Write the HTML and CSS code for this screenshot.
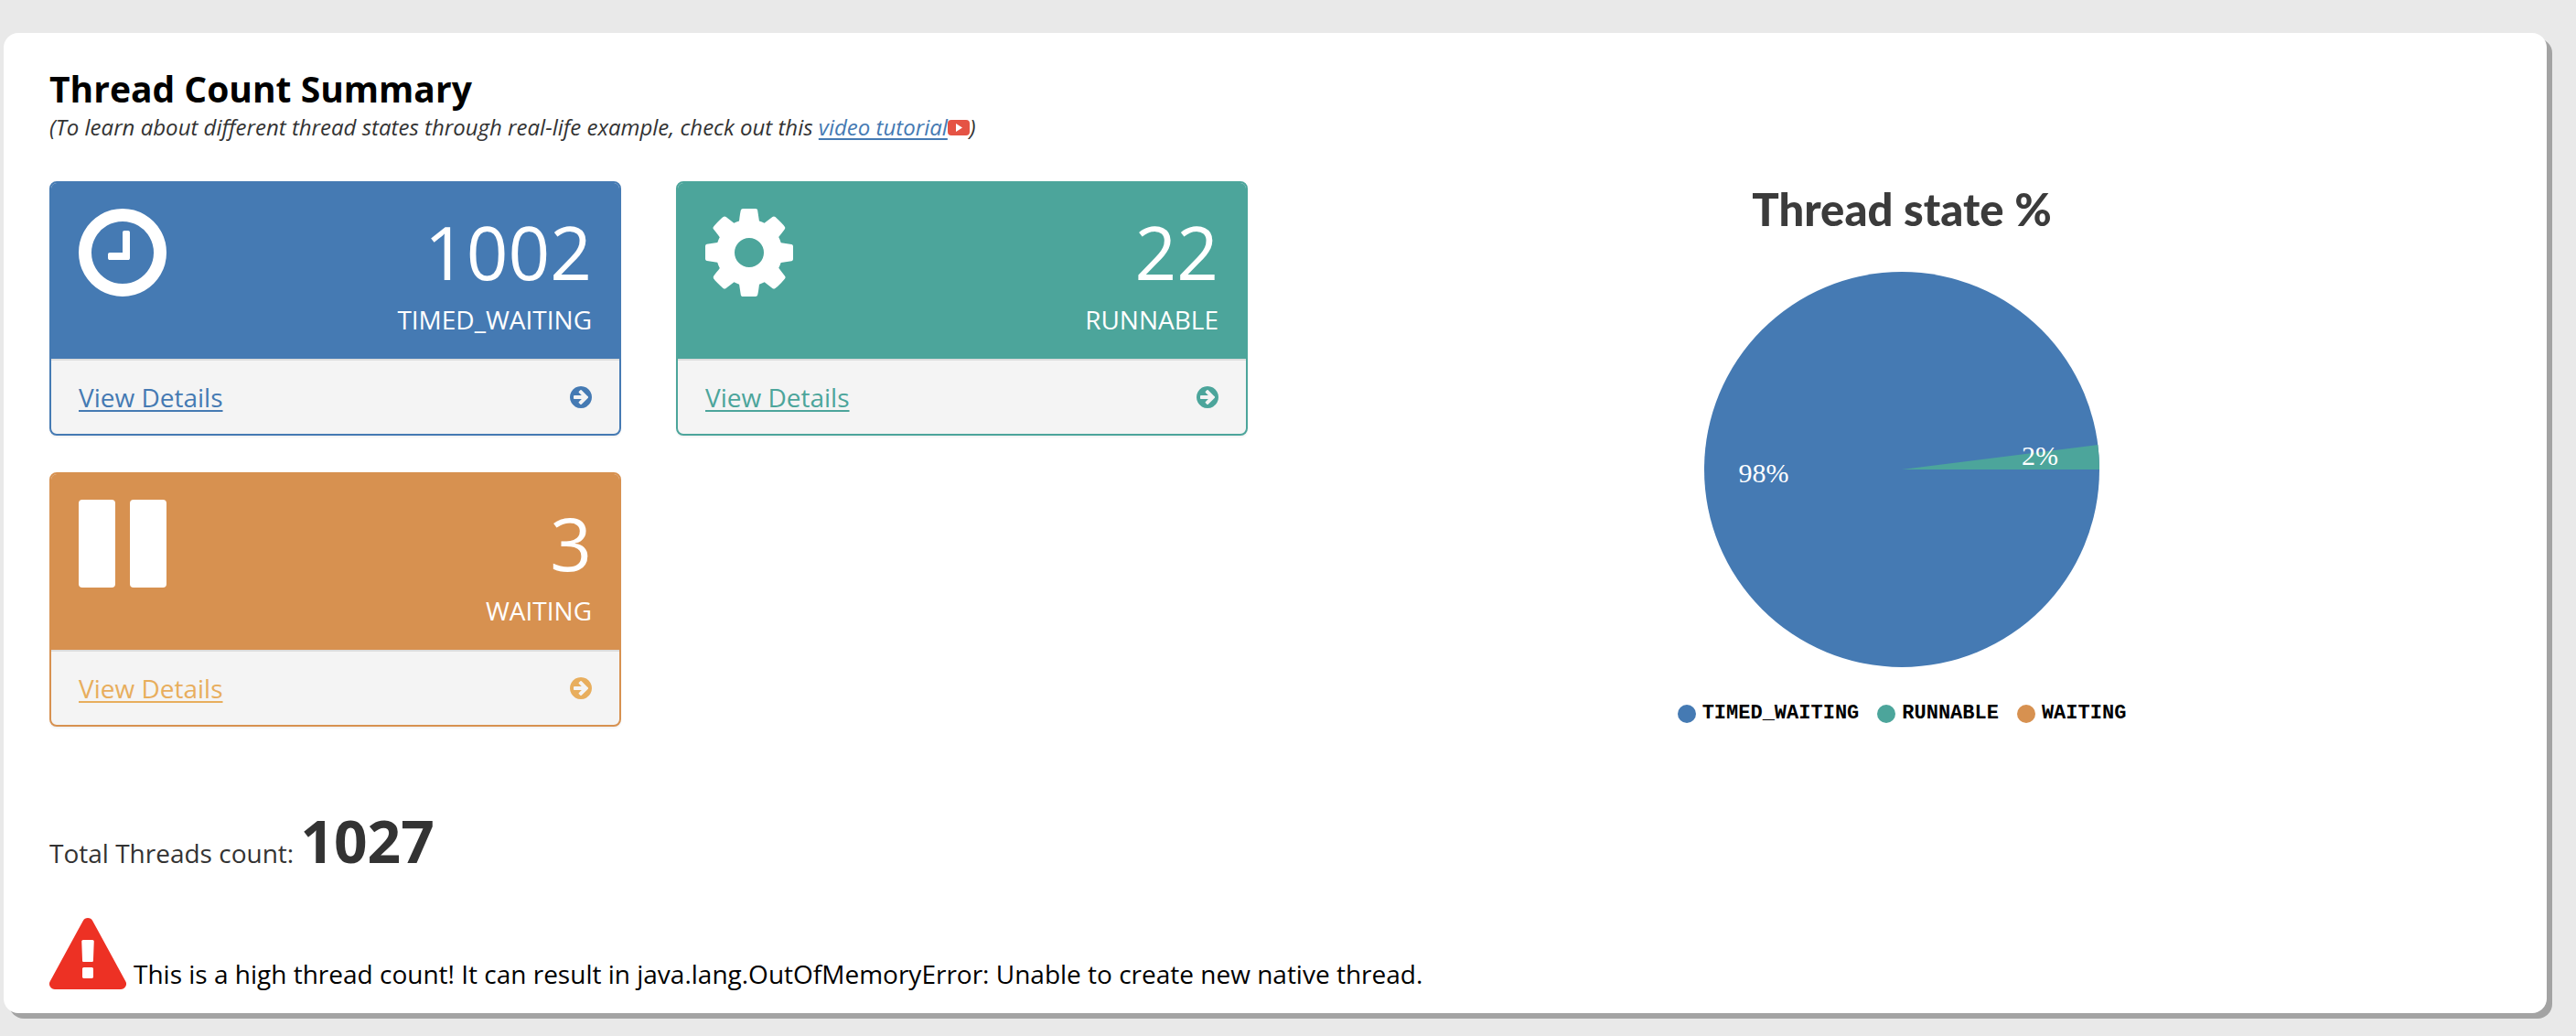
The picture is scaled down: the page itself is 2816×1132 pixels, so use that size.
FILE: index.html
```html
<!DOCTYPE html>
<html lang="en">
<head>
<meta charset="utf-8">
<title>Thread Count Summary</title>
<link rel="stylesheet" href="styles.css">
</head>
<body>
<svg class="defs" aria-hidden="true">
  <symbol id="arrow" viewBox="0 128 1536 1536"><path d="M1285 896q0-27-18-45l-91-91-362-362q-18-18-45-18t-45 18l-91 91q-18 18-18 45t18 45l189 189h-502q-26 0-45 19t-19 45v128q0 26 19 45t45 19h502l-189 189q-19 19-19 45t19 45l91 91q18 18 45 18t45-18l362-362 91-91q18-18 18-45zm251 0q0 209-103 385.500t-279.500 279.500-385.500 103-385.500-103-279.500-279.500-103-385.500 103-385.500 279.500-279.500 385.500-103 385.500 103 279.500 279.500 103 385.500z"/></symbol>
</svg>
<main class="panel">
  <h1 class="title">Thread Count Summary</h1>
  <p class="hint">(To learn about different thread states through real-life example, check out this <a class="link" href="#tutorial">video tutorial</a><svg class="video" viewBox="0 0 24 17" aria-hidden="true"><rect width="24" height="17" rx="4" fill="#e55344"/><path d="M9 4v9l7-4.500z" fill="#fff"/></svg>)</p>

  <div class="overview">
    <div class="states">
      <section class="state timed">
        <div class="state-head">
          <svg class="icon" viewBox="0 128 1536 1536" aria-hidden="true"><path d="M896 544v448q0 14-9 23t-23 9h-320q-14 0-23-9t-9-23v-64q0-14 9-23t23-9h224v-352q0-14 9-23t23-9h64q14 0 23 9t9 23zm416 352q0-148-73-273t-198-198-273-73-273 73-198 198-73 273 73 273 198 198 273 73 273-73 198-198 73-273zm224 0q0 209-103 385.500t-279.500 279.500-385.500 103-385.500-103-279.500-279.500-103-385.500 103-385.500 279.500-279.500 385.500-103 385.500 103 279.500 279.500 103 385.500z"/></svg>
          <div class="figures"><div class="count">1002</div><div class="name">TIMED_WAITING</div></div>
        </div>
        <div class="state-foot"><a href="#timed-waiting">View Details</a><svg class="arrow" aria-hidden="true"><use href="#arrow"/></svg></div>
      </section>
      <section class="state runnable">
        <div class="state-head">
          <svg class="icon" viewBox="0 128 1536 1536" aria-hidden="true"><path d="M1024 896q0-106-75-181t-181-75-181 75-75 181 75 181 181 75 181-75 75-181zm512-109v222q0 12-8 23t-20 13l-185 28q-19 54-39 91 35 50 107 138 10 12 10 25t-9 23q-27 37-99 108t-94 71q-12 0-26-9l-138-108q-44 23-91 38-16 136-29 186-7 28-36 28h-222q-14 0-24.500-8.500t-11.500-21.500l-28-184q-49-16-90-37l-141 107q-10 9-25 9-14 0-25-11-126-114-165-168-7-10-7-23 0-12 8-23 15-21 51-66.500t54-70.500q-27-50-41-99l-183-27q-13-2-21-12.500t-8-23.500v-222q0-12 8-23t19-13l186-28q14-46 39-92-40-57-107-138-10-12-10-24 0-10 9-23 26-36 98.500-107.500t94.500-71.500q13 0 26 10l138 107q44-23 91-38 16-136 29-186 7-28 36-28h222q14 0 24.500 8.500t11.500 21.500l28 184q49 16 90 37l142-107q9-9 24-9 13 0 25 10 129 119 165 170 7 8 7 22 0 12-8 23-15 21-51 66.500t-54 70.500q26 50 41 98l183 28q13 2 21 12.500t8 23.500z"/></svg>
          <div class="figures"><div class="count">22</div><div class="name">RUNNABLE</div></div>
        </div>
        <div class="state-foot"><a href="#runnable">View Details</a><svg class="arrow" aria-hidden="true"><use href="#arrow"/></svg></div>
      </section>
      <section class="state waiting">
        <div class="state-head">
          <svg class="icon" viewBox="0 0 96 96" aria-hidden="true"><rect width="40" height="96" rx="4"/><rect x="56" width="40" height="96" rx="4"/></svg>
          <div class="figures"><div class="count">3</div><div class="name">WAITING</div></div>
        </div>
        <div class="state-foot"><a href="#waiting">View Details</a><svg class="arrow" aria-hidden="true"><use href="#arrow"/></svg></div>
      </section>
    </div>

    <section class="chart">
      <h2 class="chart-title">Thread state %</h2>
      <svg class="pie" viewBox="0 0 432 432" role="img" aria-label="Thread states">
        <circle cx="216" cy="216" r="216" fill="#457ab3"/>
        <path d="M216 216L430.300 189A216 216 0 0 1 432 216z" fill="#4ca59b"/>
        <text x="65" y="230" text-anchor="middle">98%</text>
        <text x="367" y="211" text-anchor="middle">2%</text>
      </svg>
      <ul class="legend">
        <li class="timed">TIMED_WAITING</li>
        <li class="runnable">RUNNABLE</li>
        <li class="waiting">WAITING</li>
      </ul>
    </section>
  </div>

  <p class="total">Total Threads count: <strong>1027</strong></p>
  <p class="alert"><svg class="warn" viewBox="0 0 1792 1664" aria-hidden="true"><path d="M1024 1375v-190q0-14-9.500-23.500t-22.500-9.500h-192q-13 0-22.500 9.500t-9.500 23.500v190q0 14 9.500 23.500t22.500 9.500h192q13 0 22.500-9.500t9.500-23.500zm-2-374l18-459q0-12-10-19-13-11-24-11h-220q-11 0-24 11-10 7-10 21l17 457q0 10 10 16.500t24 6.500h185q14 0 23.500-6.500t10.500-16.500zm-14-934l768 1408q35 63-2 126-17 29-46.500 46t-63.500 17h-1536q-34 0-63.500-17t-46.500-46q-37-63-2-126l768-1408q17-31 47-49t65-18 65 18 47 49z"/></svg><span>This is a high thread count! It can result in java.lang.OutOfMemoryError: Unable to create new native thread.</span></p>
</main>
</body>
</html>
```
FILE: styles.css
```css
* { box-sizing: border-box; }
body {
  margin: 0;
  padding: 36px 32px 24px 4px;
  background: #e9e9e9;
  color: #333;
  font: 28px/40px "Open Sans", "Noto Sans", sans-serif;
}
h1, h2, p, ul { margin: 0; padding: 0; }
.defs { display: none; }

.panel {
  padding: 34px 50px 26px;
  background: #fff;
  border-radius: 16px;
  box-shadow: 6px 6px 0 #a3a3a3;
}
.title { font-size: 39px; line-height: 54px; font-weight: 700; color: #000; }
.hint { font-size: 24px; line-height: 30px; font-style: italic; }
.link { color: #457ab3; text-underline-offset: 3px; text-decoration-thickness: 2px; }
.video { width: 24px; height: 17px; }

.overview {
  display: grid;
  grid-template-columns: 1fr 1fr;
  gap: 60px;
  margin-top: 44px;
}
.states {
  display: grid;
  grid-template-columns: 1fr 1fr;
  gap: 40px 60px;
  align-content: start;
}
.timed { --tone: #457ab3; --link: #457ab3; }
.runnable { --tone: #4ca59b; --link: #4ca59b; }
.waiting { --tone: #d79150; --link: #e8ae5d; }
.state {
  overflow: hidden;
  border: 2px solid var(--tone);
  border-radius: 8px;
  background: #f4f4f4;
  box-shadow: 0 2px 2px rgba(0, 0, 0, 0.05);
}
.state-head {
  display: flex;
  justify-content: space-between;
  padding: 28px 30px 16px;
  background: var(--tone);
  color: #fff;
}
.icon { width: 96px; height: 96px; fill: #fff; }
.figures { text-align: right; }
.count { font-size: 80px; line-height: 94px; }
.name { line-height: 54px; }
.state-foot {
  display: flex;
  justify-content: space-between;
  align-items: center;
  padding: 20px 30px;
  border-top: 2px solid #ddd;
}
.state-foot a { color: var(--link); text-underline-offset: 3px; text-decoration-thickness: 2px; }
.arrow { width: 24px; height: 24px; fill: var(--link); }

.chart { display: flex; flex-direction: column; align-items: center; }
.chart-title {
  color: #3b3b3b;
  font: 900 49px/60px Lato, sans-serif;
}
.pie { width: 432px; height: 432px; margin: 39px 0 37px; }
.pie text { fill: #fff; font: 30px "Liberation Serif", serif; }
.legend {
  display: flex;
  gap: 20px;
  list-style: none;
  color: #000;
  font: 700 22px/28px "Liberation Mono", monospace;
}
.legend li { display: flex; align-items: center; gap: 7px; }
.legend li::before {
  content: "";
  width: 20px;
  height: 20px;
  border-radius: 50%;
  background: var(--tone);
}

.total { margin-top: 80px; line-height: 90px; }
.total strong { font-size: 64px; }
.alert {
  display: flex;
  align-items: flex-end;
  gap: 8px;
  margin-top: 26px;
  line-height: 34px;
  color: #000;
}
.warn { width: 84px; height: 78px; fill: #ed3124; }
```
